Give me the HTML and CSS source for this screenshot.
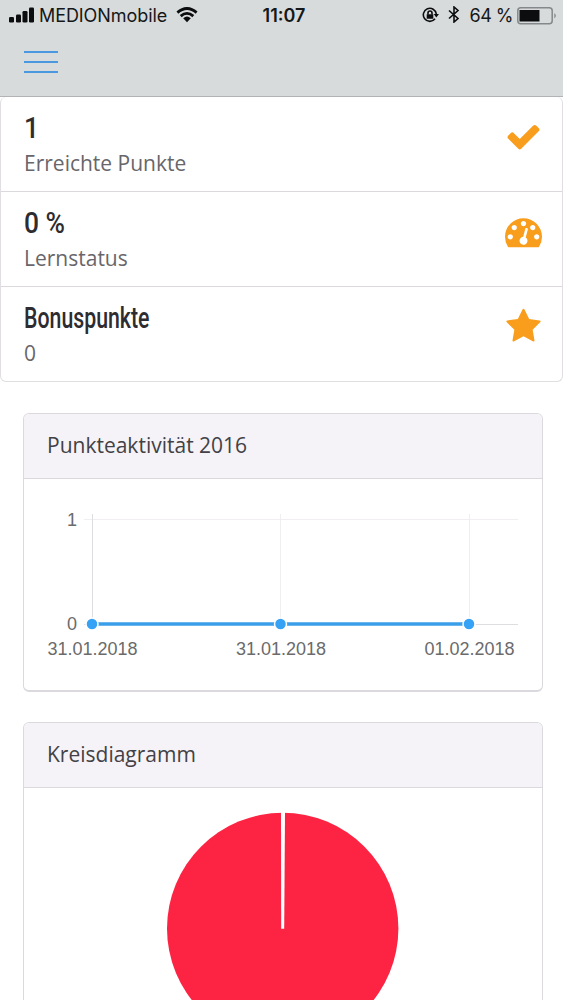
FILE: index.html
```html
<!DOCTYPE html>
<html lang="de">
<head>
  <meta charset="UTF-8" />
  <meta name="viewport" content="width=device-width, initial-scale=1" />
  <title>Lernstatus</title>
  <link rel="stylesheet" href="styles.css">
</head>
<body>

  <!-- Header -->
  <header class="app-header">
    <div class="status-bar">
      <div class="status-left">
        <svg class="signal" width="26" height="16" viewBox="0 0 26 16">
          <rect x="0" y="10" width="5" height="5.500" rx="1.3" />
          <rect x="7" y="7.500" width="5" height="8" rx="1.3" />
          <rect x="13.500" y="4" width="5" height="11.500" rx="1.3" />
          <rect x="20" y="0.500" width="5" height="15" rx="1.3" />
        </svg>
        <span class="carrier">MEDIONmobile</span>
        <svg class="wifi" width="22" height="16" viewBox="0 0 22 16">
          <path d="M1.4 5.6Q11-2.7 20.6 5.6M4.7 9.1Q11 3.6 17.3 9.1" />
          <path class="solid" d="M7.2 11.2Q11 8 14.8 11.2L11 15.2z" />
        </svg>
      </div>
      <div class="clock">11:07</div>
      <div class="status-right">
        <svg class="lock" width="18" height="16" viewBox="0 0 18 16">
          <path d="M13 11.800A6.500 6.500 0 1 1 14.300 7" />
          <path d="M6 7.500V6a2 2 0 0 1 4 0v1.500" />
          <path class="solid" d="M4.700 7.200h6.600v4.500H4.700zM11.700 7H17l-2.700 3.500z" />
        </svg>
        <svg class="bluetooth" width="12" height="17" viewBox="0 0 12 17">
          <path d="M1 4.500l9 8L6 16V1l4 3.500-9 8" />
        </svg>
        <span class="percent">64 %</span>
        <svg class="battery" width="40" height="18" viewBox="0 0 40 18">
          <rect class="shell" x="0.800" y="0.800" width="34.400" height="16" rx="3" />
          <rect x="2.500" y="3" width="20" height="11.500" />
          <path class="tip" d="M37.300 6v5.500q3.200-2.700 0-5.500z" />
        </svg>
      </div>
    </div>
    <button class="menu-btn" aria-label="Menu">
      <span></span>
      <span></span>
      <span></span>
    </button>
  </header>

  <!-- Stats -->
  <ul class="stats">
    <li>
      <div>
        <h2 class="number">1</h2>
        <p>Erreichte Punkte</p>
      </div>
      <svg class="icon" viewBox="0 0 1792 1792"><path d="M1671 566q0 40-28 68l-724 724-136 136q-28 28-68 28t-68-28l-136-136-362-362q-28-28-28-68t28-68l136-136q28-28 68-28t68 28l294 295 656-657q28-28 68-28t68 28l136 136q28 28 28 68z" /></svg>
    </li>
    <li>
      <div>
        <h2 class="number">0 %</h2>
        <p>Lernstatus</p>
      </div>
      <svg class="icon" viewBox="0 0 1792 1792"><path d="M384 1152q0-53-37.500-90.500t-90.500-37.500-90.500 37.500-37.500 90.500 37.500 90.500 90.500 37.500 90.500-37.500 37.500-90.500zm192-448q0-53-37.500-90.500t-90.500-37.500-90.500 37.500-37.500 90.500 37.500 90.500 90.500 37.500 90.500-37.500 37.500-90.500zm428 481l101-382q6-26-7.500-48.500t-38.500-29.500-48 6.500-30 39.500l-101 382q-60 5-107 43.500t-63 98.500q-20 77 20 146t117 89 146-20 89-117q16-60-6-117t-72-91zm660-33q0-53-37.500-90.500t-90.500-37.500-90.500 37.500-37.500 90.500 37.500 90.500 90.500 37.500 90.500-37.500 37.500-90.500zm-640-640q0-53-37.500-90.500t-90.500-37.500-90.500 37.500-37.500 90.500 37.500 90.500 90.500 37.500 90.500-37.500 37.500-90.500zm448 192q0-53-37.500-90.500t-90.500-37.500-90.500 37.500-37.500 90.500 37.500 90.500 90.500 37.500 90.500-37.500 37.500-90.500zm320 448q0 261-141 483-19 29-54 29h-1402q-35 0-54-29-141-221-141-483 0-182 71-348t191-286 286-191 348-71 348 71 286 191 191 286 71 348z" /></svg>
    </li>
    <li>
      <div>
        <h2>Bonuspunkte</h2>
        <p>0</p>
      </div>
      <svg class="icon" viewBox="0 0 1792 1792"><path d="M1728 647q0 22-26 48l-363 354 86 500q1 7 1 20 0 21-10.500 35.500t-30.500 14.500q-19 0-40-12l-449-236-449 236q-22 12-40 12-21 0-31.500-14.500t-10.500-35.500q0-6 2-20l86-500-364-354q-25-27-25-48 0-37 56-46l502-73 225-455q19-41 49-41t49 41l225 455 502 73q56 9 56 46z" /></svg>
    </li>
  </ul>

  <!-- Charts -->
  <main class="charts">
    <section class="card">
      <div class="card-header">Punkteaktivität 2016</div>
      <svg class="line-chart" width="518" height="211" viewBox="0 0 518 211">
        <g class="grid">
          <path d="M60 40.500H494M256.500 35V145M445.500 35V145" />
          <path class="axis" d="M68.500 35V145M60 145.500H494" />
        </g>
        <path class="series" d="M68 145H445" />
        <g class="points">
          <circle cx="68" cy="145" r="6" />
          <circle cx="256.500" cy="145" r="6" />
          <circle cx="445" cy="145" r="6" />
        </g>
        <g class="y-labels">
          <text x="53" y="47">1</text>
          <text x="53" y="151">0</text>
        </g>
        <g class="x-labels">
          <text x="68.500" y="175.500">31.01.2018</text>
          <text x="257" y="175.500">31.01.2018</text>
          <text x="445.500" y="175.500">01.02.2018</text>
        </g>
      </svg>
    </section>

    <section class="card">
      <div class="card-header">Kreisdiagramm</div>
      <svg class="pie-chart" width="518" height="282" viewBox="0 0 518 282">
        <circle cx="258.700" cy="140.500" r="115.700" />
        <path d="M257 24H261L260.200 140.800H257.200z" />
      </svg>
    </section>
  </main>

</body>
</html>
```
FILE: styles.css
```css
* {
  box-sizing: border-box;
}

body {
  margin: 0;
  height: 1000px;
  overflow: hidden;
  background: #fff;
  color: #3a383c;
  font-family: 'Open Sans', 'Noto Sans', sans-serif;
}

.app-header {
  height: 97px;
  background: #d8dbdc;
  border-bottom: 1px solid #b2b3b5;
}

.status-bar {
  display: grid;
  grid-template-columns: 1fr auto 1fr;
  align-items: center;
  height: 31px;
  padding: 0 6px 0 9px;
  color: #151718;
  font-family: Inter, Roboto, sans-serif;
  font-size: 18px;
  white-space: nowrap;
}

.status-left,
.status-right {
  display: flex;
  align-items: center;
}

.status-right {
  justify-content: flex-end;
}

.status-bar svg {
  flex: none;
  fill: #0c0d0e;
}

.signal {
  margin-bottom: 1px;
}

.carrier {
  margin: 0 9px 0 4px;
  letter-spacing: -0.07px;
}

.clock {
  padding-left: 2px;
  font-weight: 600;
}

.wifi {
  margin-bottom: 2px;
}

.wifi path {
  fill: none;
  stroke: #0c0d0e;
  stroke-width: 2.8;
}

.lock path,
.bluetooth path {
  fill: none;
  stroke: #0c0d0e;
  stroke-width: 1.6;
}

.wifi .solid,
.lock .solid {
  fill: #0c0d0e;
  stroke: none;
}

.lock {
  margin: 0 8px 2px 0;
}

.bluetooth {
  margin: 0 9px 2px 0;
}

.percent {
  margin-right: 4px;
  letter-spacing: -0.5px;
}

.battery .shell {
  fill: none;
  stroke: #85888a;
  stroke-width: 1.5;
}

.battery .tip {
  fill: #85888a;
}

.menu-btn {
  display: flex;
  flex-direction: column;
  gap: 8px;
  margin: 20px 0 0 24px;
  padding: 0;
  border: none;
  background: none;
}

.menu-btn span {
  width: 34px;
  height: 2px;
  background: #4a98e0;
}

.stats {
  height: 285px;
  margin: 0;
  padding: 0;
  list-style: none;
  border: 1px solid #e0dee2;
  border-width: 0 1px 1px 1px;
  border-radius: 6px;
}

.stats li {
  display: flex;
  justify-content: space-between;
  height: 95px;
  padding: 14px 20px 0 23px;
  border-bottom: 1px solid #dbd9dd;
}

.stats li:last-child {
  height: 94px;
  border-bottom: none;
}

.stats h2 {
  margin: 0;
  color: #2e2c30;
  font-family: Roboto, sans-serif;
  font-size: 30px;
  font-weight: 500;
  line-height: 34px;
  transform: scaleX(0.71);
  transform-origin: left;
}

/* digits are set a little wider than the words */
.stats .number {
  transform: scaleX(0.88);
}

.stats p {
  margin: 4px 0 0;
  color: #68666a;
  font-size: 21px;
  line-height: 28px;
}

.icon {
  width: 37px;
  height: 37px;
  margin-top: 7px;
  fill: #f99d1c;
}

.charts {
  display: flex;
  flex-direction: column;
  gap: 30px;
  padding: 31px 20px 0 23px;
}

.card {
  border: 1px solid #dbd9dd;
  border-bottom-width: 2px;
  border-radius: 6px;
  overflow: hidden;
}

.card-header {
  height: 65px;
  padding-left: 23px;
  background: #f5f3f7;
  border-bottom: 1px solid #dbd9dd;
  color: #434145;
  font-size: 21px;
  line-height: 63px;
}

.card svg {
  display: block;
}

.grid path {
  fill: none;
  stroke: #f0eef1;
}

.grid .axis {
  stroke: #dedde0;
}

.series {
  stroke: #3a9ee9;
  stroke-width: 3.5;
}

.points {
  fill: #36a2f5;
  stroke: #fff;
  stroke-width: 1.5;
}

.line-chart text {
  fill: #6b6b6b;
  font-family: 'Liberation Sans', Arial, sans-serif;
  font-size: 18px;
}

.y-labels {
  text-anchor: end;
}

.x-labels {
  text-anchor: middle;
}

.pie-chart circle {
  fill: #fd2443;
}

.pie-chart path {
  fill: #fff;
}
```
